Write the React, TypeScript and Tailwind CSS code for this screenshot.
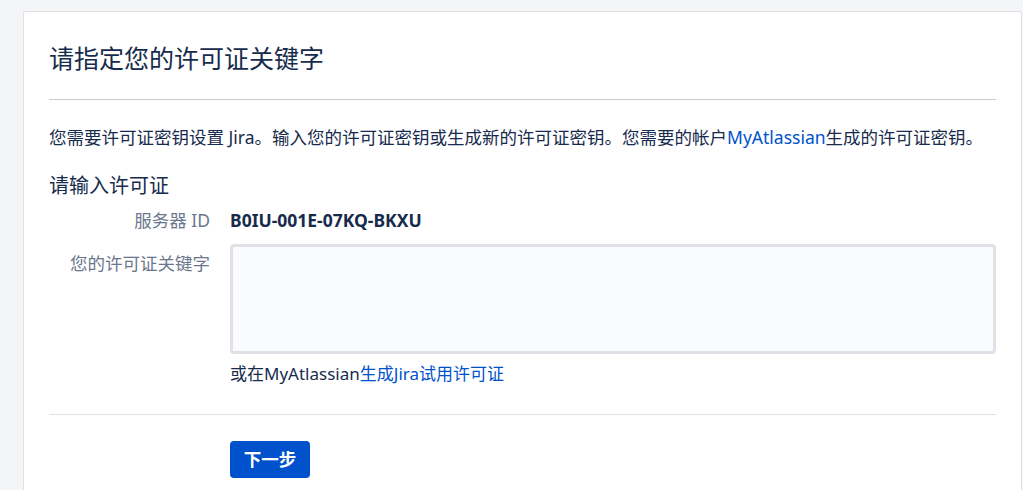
import React, { useState } from 'react';

const font = { fontFamily: '"Noto Sans", "Noto Sans CJK SC", sans-serif' };

const App: React.FC = () => {
  const [licenseKey, setLicenseKey] = useState('');

  return (
    <div className="min-h-screen bg-[#f4f5f7] pl-[23px] pr-[1px] pt-[11px] text-[#172b4d]" style={font}>
      <div className="min-h-[480px] rounded-t-[3px] border border-b-0 border-[#dfe1e6] bg-white px-[25px]">
        <div className="border-b border-[#c9ccd1] pb-[26px] pt-[31px]">
          <h2 className="text-[25px] font-normal leading-[30px]">请指定您的许可证关键字</h2>
        </div>

        <p className="mt-[25px] whitespace-nowrap text-[17.5px] leading-[25px]">
          您需要许可证密钥设置 Jira。输入您的许可证密钥或生成新的许可证密钥。您需要的帐户
          <a href="#" className="text-[#0052cc]">MyAtlassian</a>
          生成的许可证密钥。
        </p>

        <h3 className="mt-[23px] text-[20px] font-normal leading-[25px]">请输入许可证</h3>

        <form className="mt-[10px] grid grid-cols-[161px_1fr] gap-x-[20px] text-[17.5px] leading-[25px]">
          <div className="text-right text-[#6b778c]">服务器 ID</div>
          <div className="font-bold">B0IU-001E-07KQ-BKXU</div>

          <label className="mt-[11px] pt-[7px] text-right text-[#6b778c]">您的许可证关键字</label>
          <div className="mt-[11px]">
            <textarea
              value={licenseKey}
              onChange={(e) => setLicenseKey(e.target.value)}
              className="block h-[110px] w-full resize-none rounded-[4px] border-[3px] border-[#dfe1e6] bg-[#fafbfc] px-2 py-1 outline-none"
            />
            <div className="mt-[7px] text-[17px]">
              或在MyAtlassian
              <a href="#" className="text-[#0052cc]">生成Jira试用许可证</a>
            </div>
          </div>
        </form>

        <div className="mt-[28px] border-t border-[#dfe1e6] pt-[26px]">
          <button
            type="button"
            className="ml-[181px] h-[37px] w-[80px] rounded-[4px] bg-[#0052cc] text-[17.5px] font-bold text-white"
          >
            下一步
          </button>
        </div>
      </div>
    </div>
  );
};

export default App;
